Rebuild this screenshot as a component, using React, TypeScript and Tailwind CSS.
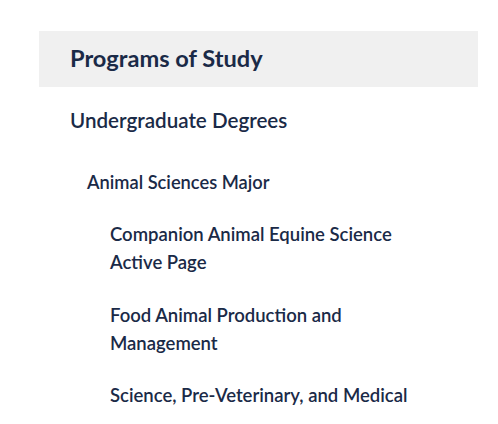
import type React from "react";

const font = { fontFamily: "Lato, 'Noto Sans', sans-serif" };

const App: React.FC = () => {
  return (
    <div className="min-h-screen bg-white pt-[31px] text-[#1a2a47]" style={font}>
      <nav className="ml-[39px] w-[439px]">
        <div className="flex h-[56px] items-center bg-[#f0f0f0] pl-[31px]">
          <h2 className="text-[23.6px] font-bold">Programs of Study</h2>
        </div>
        <ul className="pl-[31px] pr-[48px]">
          <li className="mt-[19px] text-[20.6px] font-semibold leading-[28px]">
            Undergraduate Degrees
          </li>
          <li className="mt-[34px] pl-[17px] text-[18.3px] font-semibold leading-[28px]">
            Animal Sciences Major
          </li>
          <li className="mt-[24px] pl-[40px] text-[18.5px] font-semibold leading-[28px]">
            Companion Animal Equine Science
            <span className="block">Active Page</span>
          </li>
          <li className="mt-[25px] pl-[40px] text-[18.5px] font-semibold leading-[28px]">
            Food Animal Production and Management
          </li>
          <li className="mt-[24px] pl-[40px] text-[18.5px] font-semibold leading-[28px]">
            Science, Pre-Veterinary, and Medical
          </li>
        </ul>
      </nav>
    </div>
  );
};

export default App;
